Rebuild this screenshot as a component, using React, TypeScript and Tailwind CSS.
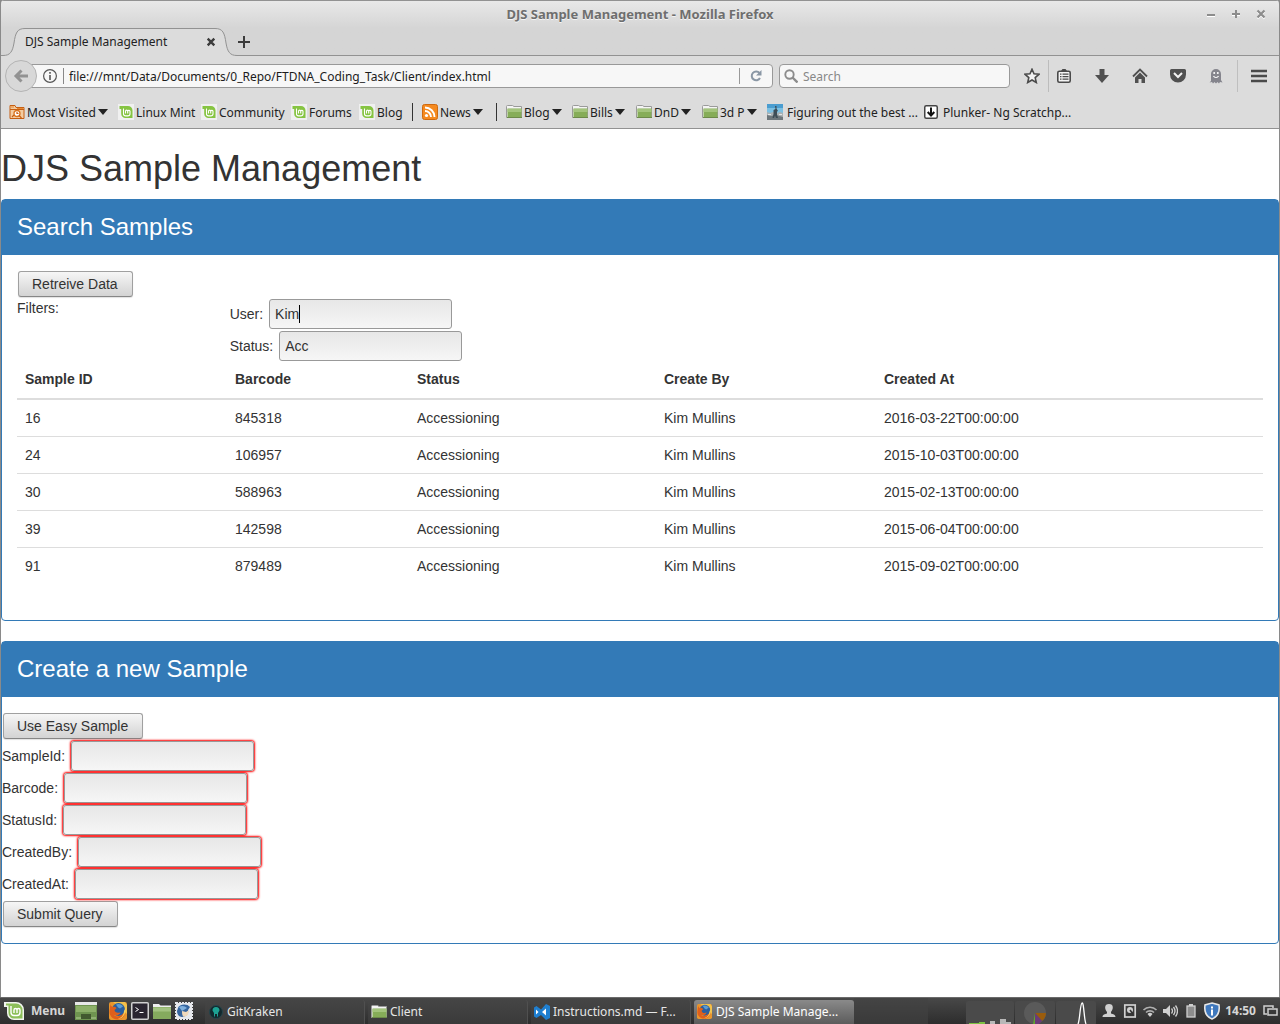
import React from "react";

const samples = [
  ["16", "845318", "Accessioning", "Kim Mullins", "2016-03-22T00:00:00"],
  ["24", "106957", "Accessioning", "Kim Mullins", "2015-10-03T00:00:00"],
  ["30", "588963", "Accessioning", "Kim Mullins", "2015-02-13T00:00:00"],
  ["39", "142598", "Accessioning", "Kim Mullins", "2015-06-04T00:00:00"],
  ["91", "879489", "Accessioning", "Kim Mullins", "2015-09-02T00:00:00"],
];

const columns = [
  { title: "Sample ID", width: "w-[210px]" },
  { title: "Barcode", width: "w-[182px]" },
  { title: "Status", width: "w-[247px]" },
  { title: "Create By", width: "w-[220px]" },
  { title: "Created At", width: "" },
];

/* ---------- icons ---------- */

function MintIcon() {
  return (
    <svg width="16" height="16" viewBox="0 0 16 16" className="shrink-0">
      <rect width="16" height="16" fill="#f0f0f0" />
      <path d="M1.500 2H10a4.500 4.500 0 0 1 4.500 4.500v7.500H7.500A4.300 4.300 0 0 1 3.200 9.700V5H1.500z" fill="#86c442" />
      <path d="M5.500 4.500v5.200a2.200 2.200 0 0 0 2.200 2.200h2.100a2.200 2.200 0 0 0 2.200-2.200V7.200a1.200 1.200 0 0 0-2.300 0v2.300M9.700 7.200a1.100 1.100 0 0 0-2.200 0v2.300" fill="none" stroke="#fff" strokeWidth="1.100" />
    </svg>
  );
}

function MostVisitedIcon() {
  return (
    <svg width="16" height="16" viewBox="0 0 16 16" className="shrink-0">
      <path d="M1 1.500h5l1 2h8v11H1z" fill="#f3cda2" stroke="#c65f12" />
      <path d="M1 5.500h14" stroke="#c65f12" />
      <path d="M2 3h3M8 4.500h6" stroke="#e98a32" />
      <circle cx="8" cy="9.500" r="3" fill="#fff" stroke="#d9741f" strokeWidth="1.300" />
      <path d="M8 8v1.500h1.500M10 11.500l2.500 2.500M3 13l2-2" fill="none" stroke="#c65f12" strokeWidth="1.200" />
    </svg>
  );
}

function FolderIcon() {
  return (
    <svg width="16" height="16" viewBox="0 0 16 16" className="shrink-0">
      <path d="M.5 13.500V2.500a1 1 0 0 1 1-1h5l1.500 1h7.500v11z" fill="#f4f4f4" stroke="#9a9a9a" />
      <path d="M1.500 4.500h14v9h-14z" fill="#86ad58" />
      <path d="M1.500 5h14v3h-14z" fill="#a3c47c" />
      <path d="M1 13.500h15" stroke="#6c8a49" />
    </svg>
  );
}

function RssIcon() {
  return (
    <svg width="16" height="16" viewBox="0 0 16 16" className="shrink-0">
      <rect x=".5" y=".5" width="15" height="15" rx="2" fill="#f58a1f" stroke="#cf6a10" />
      <circle cx="4.500" cy="11.500" r="1.600" fill="#fff" />
      <path d="M3 7a6 6 0 0 1 6 6M3 3.500a9.500 9.500 0 0 1 9.500 9.500" fill="none" stroke="#fff" strokeWidth="1.900" />
    </svg>
  );
}

function PhotoIcon() {
  return (
    <svg width="16" height="16" viewBox="0 0 16 16" className="shrink-0">
      <rect width="16" height="16" fill="#7cc0e2" />
      <path d="M0 0h16v4H0z" fill="#4a9dd0" />
      <path d="M0 8l3 1 3-1 4 1 3-1 3 1v7H0z" fill="#a9b1b4" />
      <path d="M0 11l4 1 5-1 7 2v3H0z" fill="#6d777c" />
      <path d="M8 2h1.500v2.500L11 7l-1 .5v3l1 3.500H9l-1-2.500-1 2.500H5.500l1-4V6l2-1z" fill="#3d4d57" />
      <path d="M1 10h3v1H1zM12 10h3v1h-3z" fill="#e2e6e8" />
    </svg>
  );
}

function PlunkerIcon() {
  return (
    <svg width="14" height="14" viewBox="0 0 14 14" className="shrink-0">
      <rect x=".75" y=".75" width="12.500" height="12.500" rx="1.500" fill="#fff" stroke="#444" strokeWidth="1.500" />
      <path d="M7 2.500v7.500M3.700 7L7 10.500 10.300 7" fill="none" stroke="#111" strokeWidth="2" />
    </svg>
  );
}

function Caret() {
  return (
    <svg width="10" height="6" viewBox="0 0 10 6" className="shrink-0">
      <path d="M0 0h10L5 6z" fill="#222" />
    </svg>
  );
}

function FirefoxIcon({ size }: { size: number }) {
  return (
    <svg width={size} height={size} viewBox="0 0 18 18" className="shrink-0">
      <rect width="18" height="18" rx="2" fill="#e9952c" />
      <path d="M4 0h12l2 3v9l-6-6z" fill="#f2c14b" />
      <circle cx="9.500" cy="7.500" r="6.500" fill="#2b5f9e" />
      <path d="M7 2.500c3-1.500 6 0 7 2l-3 2-2-1z" fill="#5c9bd2" />
      <path d="M1.500 1.500c0 2 .5 2.500 2 3.500 2-.5 3 0 4 1.200L5.500 8c.5 2.500 3 3.500 6 2.200-1 3.200-4.500 4-7 2.300C6 15 12 16 16 9c.5 5-3 8.500-7.500 8.500S0 14 .5 9z" fill="#df5f1c" />
      <path d="M16.500 6c1 6-3 11-8 11 4-1 6.500-4.500 6.500-8z" fill="#f7d35c" />
    </svg>
  );
}

/* ---------- browser chrome ---------- */

function TitleBar() {
  return (
    <div className="grid h-7 grid-cols-[1fr_auto_1fr] items-center">
      <span />
      <h2 className="pt-0.5 text-[13px] font-bold text-[#6e6e6e] [text-shadow:0_1px_0_#f4f4f4]">DJS Sample Management - Mozilla Firefox</h2>
      <div className="flex justify-end gap-[9px] pr-2.5 text-[#8c8c8c]">
        <button type="button" aria-label="Minimize" className="size-4">
          <svg width="16" height="16" viewBox="0 0 16 16"><path d="M4 10.500h8" stroke="#fff" /><path d="M4 9h8" stroke="currentColor" strokeWidth="2" /></svg>
        </button>
        <button type="button" aria-label="Maximize" className="size-4">
          <svg width="16" height="16" viewBox="0 0 16 16"><path d="M4 9.500h8" stroke="#fff" /><path d="M4 8h8M8 4v8" stroke="currentColor" strokeWidth="2" /></svg>
        </button>
        <button type="button" aria-label="Close" className="size-4">
          <svg width="16" height="16" viewBox="0 0 16 16"><path d="M4.500 5.500l7 7M11.500 5.500l-7 7" stroke="#fff" strokeWidth="2" /><path d="M4.500 4.500l7 7M11.500 4.500l-7 7" stroke="currentColor" strokeWidth="2.200" /></svg>
        </button>
      </div>
    </div>
  );
}

function TabStrip() {
  return (
    <div className="flex h-7">
      <svg width="24" height="28" viewBox="0 0 24 28" className="shrink-0">
        <path d="M0 28V27.500H2C9 27.500 11.500 24 13 15 14.500 5 16 .5 24 .5V28z" fill="#dcdcdc" />
        <path d="M0 27.500H2C9 27.500 11.500 24 13 15 14.500 5 16 .5 24 .5" fill="none" stroke="#929292" />
      </svg>
      <div className="flex w-[190px] items-center justify-between border-t border-[#929292] bg-[#dcdcdc]">
        <span className="pb-0.5 text-xs">DJS Sample Management</span>
        <button type="button" aria-label="Close tab" className="-mr-1 size-4">
          <svg width="16" height="16" viewBox="0 0 16 16"><path d="M4.700 3.700l6.600 6.600M11.300 3.700l-6.600 6.600" stroke="#3c3c3c" strokeWidth="2.400" /></svg>
        </button>
      </div>
      <svg width="24" height="28" viewBox="0 0 24 28" className="shrink-0">
        <path d="M24 28V27.500H22C15 27.500 12.500 24 11 15 9.500 5 8 .5 0 .5V28z" fill="#dcdcdc" />
        <path d="M24 27.500H22C15 27.500 12.500 24 11 15 9.500 5 8 .5 0 .5" fill="none" stroke="#929292" />
      </svg>
      <div className="flex flex-1 items-center border-b border-[#929292]">
        <button type="button" aria-label="New tab" className="-ml-0.5 size-4">
          <svg width="16" height="16" viewBox="0 0 16 16"><path d="M1 8h12M7 2v12" stroke="#3c3c3c" strokeWidth="2" /></svg>
        </button>
      </div>
    </div>
  );
}

function ToolButton({ label, children }: { label: string; children: React.ReactNode }) {
  return (
    <button type="button" aria-label={label} className="flex h-8 w-[38px] items-center justify-center">
      <svg width="16" height="16" viewBox="0 0 16 16">{children}</svg>
    </button>
  );
}

function NavBar() {
  return (
    <div className="flex h-10 items-center bg-[#dcdcdc] pl-1">
      <button type="button" aria-label="Back" className="z-10 flex size-8 shrink-0 items-center justify-center rounded-full border border-[#b4b4b4] bg-[#d8d8d8]">
        <svg width="16" height="16" viewBox="0 0 16 16"><path d="M15 8H4M8.500 2.500L3 8l5.500 5.500" fill="none" stroke="#929292" strokeWidth="3" /></svg>
      </button>
      <div className="-ml-2 flex h-6 flex-1 items-center rounded-r-sm border border-[#999] bg-[#f7f7f7] pl-[13px]">
        <svg width="14" height="14" viewBox="0 0 14 14" className="shrink-0">
          <circle cx="7" cy="7" r="6.400" fill="none" stroke="#555" strokeWidth="1.200" />
          <path d="M7 6v5M7 3v1.800" stroke="#555" strokeWidth="1.600" />
        </svg>
        <span className="ml-1.5 h-4 w-px bg-[#888]" />
        <input aria-label="Address" defaultValue="file:///mnt/Data/Documents/0_Repo/FTDNA_Coding_Task/Client/index.html" className="min-w-0 flex-1 bg-transparent px-[5px] pt-0.5 text-xs text-[#1c1c1c] outline-none" />
        <span className="h-4 w-px bg-[#999]" />
        <button type="button" aria-label="Reload" className="flex w-8 justify-center">
          <svg width="14" height="14" viewBox="0 0 14 14"><path d="M10.500 4A4.400 4.400 0 1 0 11 9" fill="none" stroke="#8a97a5" strokeWidth="2" /><path d="M12.500 1v5.500H7z" fill="#8a97a5" /></svg>
        </button>
      </div>
      <div className="ml-1.5 flex h-6 w-[231px] items-center rounded-sm border border-[#999] bg-[#f7f7f7] pl-1">
        <svg width="14" height="14" viewBox="0 0 14 14" className="shrink-0"><circle cx="5.500" cy="5.500" r="4.200" fill="none" stroke="#8c8c8c" strokeWidth="1.900" /><path d="M8.500 8.500l5 5" stroke="#8c8c8c" strokeWidth="2.400" /></svg>
        <input aria-label="Search" placeholder="Search" className="min-w-0 flex-1 bg-transparent px-[5px] pt-0.5 text-xs outline-none placeholder:text-[#888]" />
      </div>
      <div className="ml-[3px] flex items-center">
        <ToolButton label="Bookmark this page">
          <path d="M8 1.300l2 4.500 4.900.5-3.700 3.300 1.100 4.900L8 12l-4.300 2.500 1.100-4.900L1.100 6.300 6 5.800z" fill="#f2f2f2" stroke="#4a4a4a" strokeWidth="1.600" />
        </ToolButton>
        <div className="-ml-[3px] flex items-center border-l border-[#bcbcbc] [&>button]:h-4">
          <span className="-ml-1 flex">
            <ToolButton label="Bookmarks list">
              <path d="M5 3l1.500-2h3L11 3z" fill="#4a4a4a" />
              <rect x="1.800" y="3.300" width="12.400" height="10.900" rx="1.500" fill="#f4f4f4" stroke="#4a4a4a" strokeWidth="1.600" />
              <path d="M4 6.200h1.500M6.500 6.200h6M4 8.700h1.500M6.500 8.700h6M4 11.200h1.500M6.500 11.200h6" stroke="#4a4a4a" strokeWidth="1.300" />
            </ToolButton>
          </span>
        </div>
        <ToolButton label="Downloads"><path d="M5.500 1h5v6H15l-7 8-7-8h4.500z" fill="#505050" /></ToolButton>
        <ToolButton label="Home">
          <path d="M1 8.500l7-7 7 7" fill="none" stroke="#505050" strokeWidth="1.800" />
          <path d="M3 9.500l5-5 5 5V15H9.500v-4h-3v4H3z" fill="#505050" />
        </ToolButton>
        <ToolButton label="Pocket">
          <path d="M1.500 1h13A1.500 1.500 0 0 1 16 2.500v4a8 8 0 0 1-16 0v-4A1.500 1.500 0 0 1 1.500 1z" fill="#505050" />
          <path d="M4 5l4 4 4-4" fill="none" stroke="#f2f2f2" strokeWidth="2" />
        </ToolButton>
        <ToolButton label="Ghostery">
          <path d="M3 13V6a5 5 0 0 1 10 0v6l1.500 2.500-2.500-.5-1 1.500-1.500-1.500L8 15.500 6.500 14 5 15.500 4 14l-2.500.5z" fill="#85858d" />
          <circle cx="6.200" cy="5" r="1" fill="#fff" /><circle cx="9.800" cy="5" r="1" fill="#fff" />
          <path d="M5.500 8c1 2 4 2 5 0" fill="none" stroke="#fff" strokeWidth="1.200" />
        </ToolButton>
        <span className="ml-0.5 h-8 w-px bg-[#bfbfbf]" />
        <span className="ml-0.5 flex">
          <ToolButton label="Open menu"><path d="M0 3h16M0 8h16M0 13h16" stroke="#4a4a4a" strokeWidth="2.600" /></ToolButton>
        </span>
        <span className="w-px" />
      </div>
    </div>
  );
}

function Bookmark({ icon, label, menu, width }: { icon: React.ReactNode; label: string; menu?: boolean; width: string }) {
  const body = (
    <>
      {icon}
      <span className="pt-px">{label}</span>
      {menu && <Caret />}
    </>
  );
  const layout = `flex shrink-0 items-center gap-0.5 ${width}`;
  return menu ? (
    <button type="button" className={layout}>{body}</button>
  ) : (
    <a href="#" className={layout}>{body}</a>
  );
}

function BookmarksBar() {
  return (
    <nav className="flex h-8 items-center whitespace-nowrap bg-[#dcdcdc] pl-2 text-xs">
      <Bookmark icon={<MostVisitedIcon />} label="Most Visited" menu width="w-[109px]" />
      <Bookmark icon={<MintIcon />} label="Linux Mint" width="w-[83px]" />
      <Bookmark icon={<MintIcon />} label="Community" width="w-[90px]" />
      <Bookmark icon={<MintIcon />} label="Forums" width="w-[68px]" />
      <Bookmark icon={<MintIcon />} label="Blog" width="w-[53px]" />
      <span className="mr-[9px] h-[18px] w-px shrink-0 bg-[#333]" />
      <Bookmark icon={<RssIcon />} label="News" menu width="w-[74px]" />
      <span className="mr-[9px] h-[18px] w-px shrink-0 bg-[#333]" />
      <Bookmark icon={<FolderIcon />} label="Blog" menu width="w-[66px]" />
      <Bookmark icon={<FolderIcon />} label="Bills" menu width="w-16" />
      <Bookmark icon={<FolderIcon />} label="DnD" menu width="w-[66px]" />
      <Bookmark icon={<FolderIcon />} label="3d P" menu width="w-[65px]" />
      <a href="#" className="flex w-[157px] shrink-0 items-center gap-1"><PhotoIcon /><span className="pt-px">Figuring out the best ...</span></a>
      <a href="#" className="flex items-center gap-[5px]"><PlunkerIcon /><span className="pt-px">Plunker- Ng Scratchp...</span></a>
    </nav>
  );
}

/* ---------- page ---------- */

function GtkButton({ children }: { children: React.ReactNode }) {
  return (
    <button type="button" className="m-px block h-[26px] rounded-[3px] border border-[#a0a0a0] border-b-[#868686] bg-linear-to-b from-[#f6f6f6] to-[#d3d3d3] pr-3.5 pl-[13px] shadow-[0_1px_1px_rgba(0,0,0,0.12)]">
      {children}
    </button>
  );
}

function FilterField({ id, label, value, focused }: { id: string; label: string; value: string; focused?: boolean }) {
  return (
    <div className="flex h-8 items-center gap-1.5">
      <label htmlFor={id}>{label}</label>
      <div className="relative">
        <input
          id={id}
          defaultValue={value}
          className="block h-[30px] w-[183px] rounded-[3px] border border-[#999] bg-linear-to-b from-[#e7e7e7] to-[#f6f6f6] px-[5px] outline-none"
        />
        {focused && <span className="absolute top-1.5 left-[30px] h-[18px] w-px bg-black" />}
      </div>
    </div>
  );
}

function RequiredField({ id, label }: { id: string; label: string }) {
  return (
    <div className="flex h-8 items-center gap-[5px]">
      <label htmlFor={id}>{label}</label>
      <input
        id={id}
        required
        className="m-px h-[30px] w-[183px] rounded-[3px] border border-[#999] bg-linear-to-b from-[#e7e7e7] to-[#f6f6f6] px-[5px] shadow-[0_0_2px_1px_#ff0000] outline-none"
      />
    </div>
  );
}

function Panel({ title, children }: { title: string; children: React.ReactNode }) {
  return (
    <section className="mb-5 rounded border border-[#337ab7]">
      <h3 className="bg-[#337ab7] px-[15px] pt-3.5 pb-[15px] text-2xl leading-[26px] text-white">{title}</h3>
      {children}
    </section>
  );
}

function Page() {
  return (
    <main className="flex-1 border-t border-[#929292] bg-white font-['Liberation_Sans',Arial,sans-serif] text-sm leading-5 text-[#333]">
      <h1 className="mt-5 mb-2.5 text-4xl leading-10">DJS Sample Management</h1>
      <Panel title="Search Samples">
        <div className="px-[15px] pt-[15px] pb-4">
          <GtkButton>Retreive Data</GtkButton>
          <div className="-mx-[15px] flex">
            <div className="w-1/6 px-[15px]">Filters:</div>
            <div className="w-5/6 px-[15px]">
              <FilterField id="user" label="User:" value="Kim" focused />
              <FilterField id="status" label="Status:" value="Acc" />
            </div>
          </div>
          <table className="mb-5 w-full table-fixed text-left">
            <thead>
              <tr className="border-b-2 border-[#ddd]">
                {columns.map((c) => (
                  <th key={c.title} className={`px-2 pt-[7px] pb-[9px] font-bold ${c.width}`}>{c.title}</th>
                ))}
              </tr>
            </thead>
            <tbody>
              {samples.map((row) => (
                <tr key={row[0]} className="border-t border-[#ddd]">
                  {row.map((cell) => (
                    <td key={cell} className="p-2">{cell}</td>
                  ))}
                </tr>
              ))}
            </tbody>
          </table>
        </div>
      </Panel>
      <Panel title="Create a new Sample">
        <form className="py-[15px]">
          <GtkButton>Use Easy Sample</GtkButton>
          <RequiredField id="sampleId" label="SampleId:" />
          <RequiredField id="barcode" label="Barcode:" />
          <RequiredField id="statusId" label="StatusId:" />
          <RequiredField id="createdBy" label="CreatedBy:" />
          <RequiredField id="createdAt" label="CreatedAt:" />
          <GtkButton>Submit Query</GtkButton>
        </form>
      </Panel>
    </main>
  );
}

/* ---------- desktop panel ---------- */

function Task({ icon, label, active }: { icon: React.ReactNode; label: string; active?: boolean }) {
  return (
    <button
      type="button"
      className={
        active
          ? "flex h-6 w-40 items-center gap-1 rounded-t-[3px] bg-linear-to-b from-[#8a8a8a] to-[#5c5c5c] pb-px pl-[3px] text-white"
          : "flex h-6 w-40 items-center gap-[3px] rounded-t-[3px] border-r border-[#505050] bg-linear-to-b from-[#454545] to-[#3a3a3a] pb-px pl-[3px]"
      }
    >
      {icon}
      {label}
    </button>
  );
}

function Taskbar() {
  return (
    <footer className="flex h-[27px] items-center whitespace-nowrap border-t border-[#6a6a6a] bg-linear-to-b from-[#484848] to-[#2d2d2d] pl-1 text-xs text-[#e6e6e6]">
      <button type="button" className="flex w-[71px] items-center gap-1.5 text-xs font-bold text-[#d6d6d6]">
        <svg width="21" height="20" viewBox="0 0 21 20">
          <path d="M0 1h12a8 8 0 0 1 8 8v10H10a7 7 0 0 1-7-7V6H0z" fill="#f2f5ee" />
          <path d="M2 2.500h10a6.500 6.500 0 0 1 6.500 6.500v8.500H10A5.500 5.500 0 0 1 4.500 12V4.500H2z" fill="#8dbf5a" />
          <path d="M7 5v6.500A3 3 0 0 0 10 14.500h3a3 3 0 0 0 3-3V9a1.500 1.500 0 0 0-3 0v3M13 9a1.500 1.500 0 0 0-3 0v3" fill="none" stroke="#fff" strokeWidth="1.400" />
        </svg>
        Menu
      </button>
      <button type="button" aria-label="Show desktop" className="mr-3">
        <svg width="22" height="18" viewBox="0 0 22 18"><path d="M0 0h22v18H0z" fill="#6f9450" /><path d="M0 0h22v3H0z" fill="#e8e8e8" /><path d="M1 4h20v6H1z" fill="#8db069" /><path d="M6 12h10v5H6z" fill="#42592f" /><path d="M1 16h5M16 16h5" stroke="#b4cf97" /></svg>
      </button>
      <div className="flex gap-1">
        <button type="button" aria-label="Firefox"><FirefoxIcon size={18} /></button>
        <button type="button" aria-label="Terminal">
          <svg width="18" height="18" viewBox="0 0 18 18"><rect x=".75" y=".75" width="16.500" height="16.500" rx="1" fill="#2a2530" stroke="#d0d0d0" strokeWidth="1.500" /><path d="M4.500 5.500l3 2-3 2M8.500 10.500h4" fill="none" stroke="#fff" /></svg>
        </button>
        <button type="button" aria-label="Files">
          <svg width="18" height="18" viewBox="0 0 18 18"><path d="M0 17V2h6l1.500 1.500H18V17z" fill="#eee" /><path d="M0 5h18v12H0z" fill="#85aa5e" /><path d="M0 5.500h18v4H0z" fill="#a2c280" /></svg>
        </button>
        <button type="button" aria-label="Thunderbird">
          <svg width="18" height="18" viewBox="0 0 18 18"><rect x="1" y="1" width="16" height="16" fill="#e6e8ec" stroke="#e6e8ec" strokeWidth="2" strokeDasharray="2 1" /><path d="M3 6c1-4 9-5 12-1l-2 3c1 4-2 7-6 7-3 0-5-3-5-6z" fill="#35659f" /><path d="M4 5c3-2 6-1 8 1L7 9z" fill="#7fb0de" /><path d="M7 9l4 1 3-2-1 5-4 2c-2-1-2-4-2-6z" fill="#f0d9bb" /></svg>
        </button>
      </div>
      <div className="ml-3 flex gap-[3px] self-end">
        <Task
          label="GitKraken"
          icon={<svg width="16" height="16" viewBox="0 0 16 16"><circle cx="8" cy="8" r="6.500" fill="#12282d" stroke="#24444b" /><path d="M8 3a3.500 3.500 0 0 1 3.500 3.500L10 9v3.500H9V10H7v2.500H6V9L4.500 6.500A3.500 3.500 0 0 1 8 3z" fill="#1da193" /></svg>}
        />
        <Task label="Client" icon={<FolderIcon />} />
        <Task
          label="Instructions.md — F..."
          icon={<svg width="16" height="16" viewBox="0 0 16 16"><path d="M12 0l4 2v12l-4 2-5-5-4.500 3L0 12.500V3.500L2.500 2 7 5.500z" fill="#1f7fd0" /><path d="M2 5.500v5L4.500 8zM12 4.500v7L8 8z" fill="#fff" /></svg>}
        />
        <Task label="DJS Sample Manage..." active icon={<FirefoxIcon size={15} />} />
      </div>
      <div className="h-full w-[74px] bg-[#424242]/60" />
      <div className="ml-auto flex gap-px self-end">
        <svg width="48" height="23" viewBox="0 0 48 23"><rect width="48" height="24" rx="2" fill="#4a4a4a" /><path d="M3 22h10v-1h6v2H3z" fill="#7cc142" /><path d="M24 20h5v3h-5zM34 18h6v3h5v2H34z" fill="#b8b8b8" /></svg>
        <svg width="40" height="23" viewBox="0 0 40 23"><rect width="40" height="24" rx="2" fill="#4a4a4a" /><circle cx="20" cy="12" r="11" fill="#5a5a5a" /><path d="M20 12h11a11 11 0 0 1-4 8z" fill="#9a5c0c" /><path d="M20 12l7 8-3 3h-4z" fill="#6b3b78" /><path d="M20 12v11h-2z" fill="#5da52e" /></svg>
        <svg width="40" height="23" viewBox="0 0 40 23"><rect width="40" height="24" rx="2" fill="#4a4a4a" /><path d="M22 23c2-4 2-20 4-21s2 17 4 21" fill="none" stroke="#fff" strokeWidth="1.300" /></svg>
      </div>
      <div className="ml-[5px] flex items-center gap-1 pr-0.5">
        <svg width="16" height="16" viewBox="0 0 16 16"><path d="M8 1c5 0 4.500 5 2 8v1.500c2 .5 4.500 1 4.500 3.500h-13c0-2.500 2.500-3 4.500-3.500V9C3.500 6 3 1 8 1z" fill="#d0d0d0" /></svg>
        <svg width="16" height="16" viewBox="0 0 16 16" className="ml-px"><rect x="2.800" y="2" width="10.400" height="12" fill="none" stroke="#d0d0d0" strokeWidth="1.700" /><circle cx="8" cy="7" r="3" fill="#d0d0d0" /><path d="M8 7l3 4" stroke="#333" strokeWidth="1.500" /></svg>
        <svg width="16" height="16" viewBox="0 0 16 16"><path d="M1.500 7a9 9 0 0 1 13 0M4 9.500a5.800 5.800 0 0 1 8 0" fill="none" stroke="#b0b0b0" strokeWidth="1.600" /><path d="M5.500 11a3.500 3.500 0 0 1 5 0L8 14z" fill="#d0d0d0" /></svg>
        <svg width="16" height="16" viewBox="0 0 16 16"><path d="M1 6h3l4-4v12l-4-4H1z" fill="#d0d0d0" /><path d="M9.500 5.500q2 2.500 0 5M11.500 4q3 4 0 8M13.500 2.500q4 5.500 0 11" fill="none" stroke="#d0d0d0" strokeWidth="1.300" /></svg>
        <svg width="16" height="16" viewBox="0 0 16 16" className="ml-px"><path d="M6 1h4v2H6z" fill="#d0d0d0" /><rect x="4" y="3" width="8" height="11" fill="#8d8d8d" stroke="#d0d0d0" strokeWidth="1.300" /></svg>
        <svg width="18" height="18" viewBox="0 0 18 18"><path d="M9 1l7 2c1 7-2 12-7 14C4 15 1 10 2 3z" fill="#3f78bd" stroke="#e6e6e6" strokeWidth="1.600" /><path d="M9 4.500v2M9 7.500v6" stroke="#fff" strokeWidth="2" /></svg>
        <time className="text-xs font-bold text-[#d6d6d6]">14:50</time>
        <svg width="16" height="16" viewBox="0 0 16 16" className="ml-0.5"><path d="M5 11H2V3h9v2" fill="none" stroke="#d0d0d0" strokeWidth="1.500" /><rect x="6" y="6" width="9" height="6" fill="none" stroke="#d0d0d0" strokeWidth="1.500" /></svg>
      </div>
    </footer>
  );
}

export default function App() {
  return (
    <div className="flex min-h-screen flex-col bg-[#8a8a8a] font-['Noto_Sans',sans-serif] text-[#222]">
      <div className="flex flex-1 flex-col overflow-hidden rounded-t border-x border-[#8a8a8a]">
        <header>
          <div className="bg-linear-to-b from-[#e9e9e9] to-[#d5d5d5] to-50% shadow-[inset_0_1px_0_#929292]">
            <TitleBar />
            <TabStrip />
          </div>
          <NavBar />
          <BookmarksBar />
        </header>
        <Page />
      </div>
      <Taskbar />
    </div>
  );
}
